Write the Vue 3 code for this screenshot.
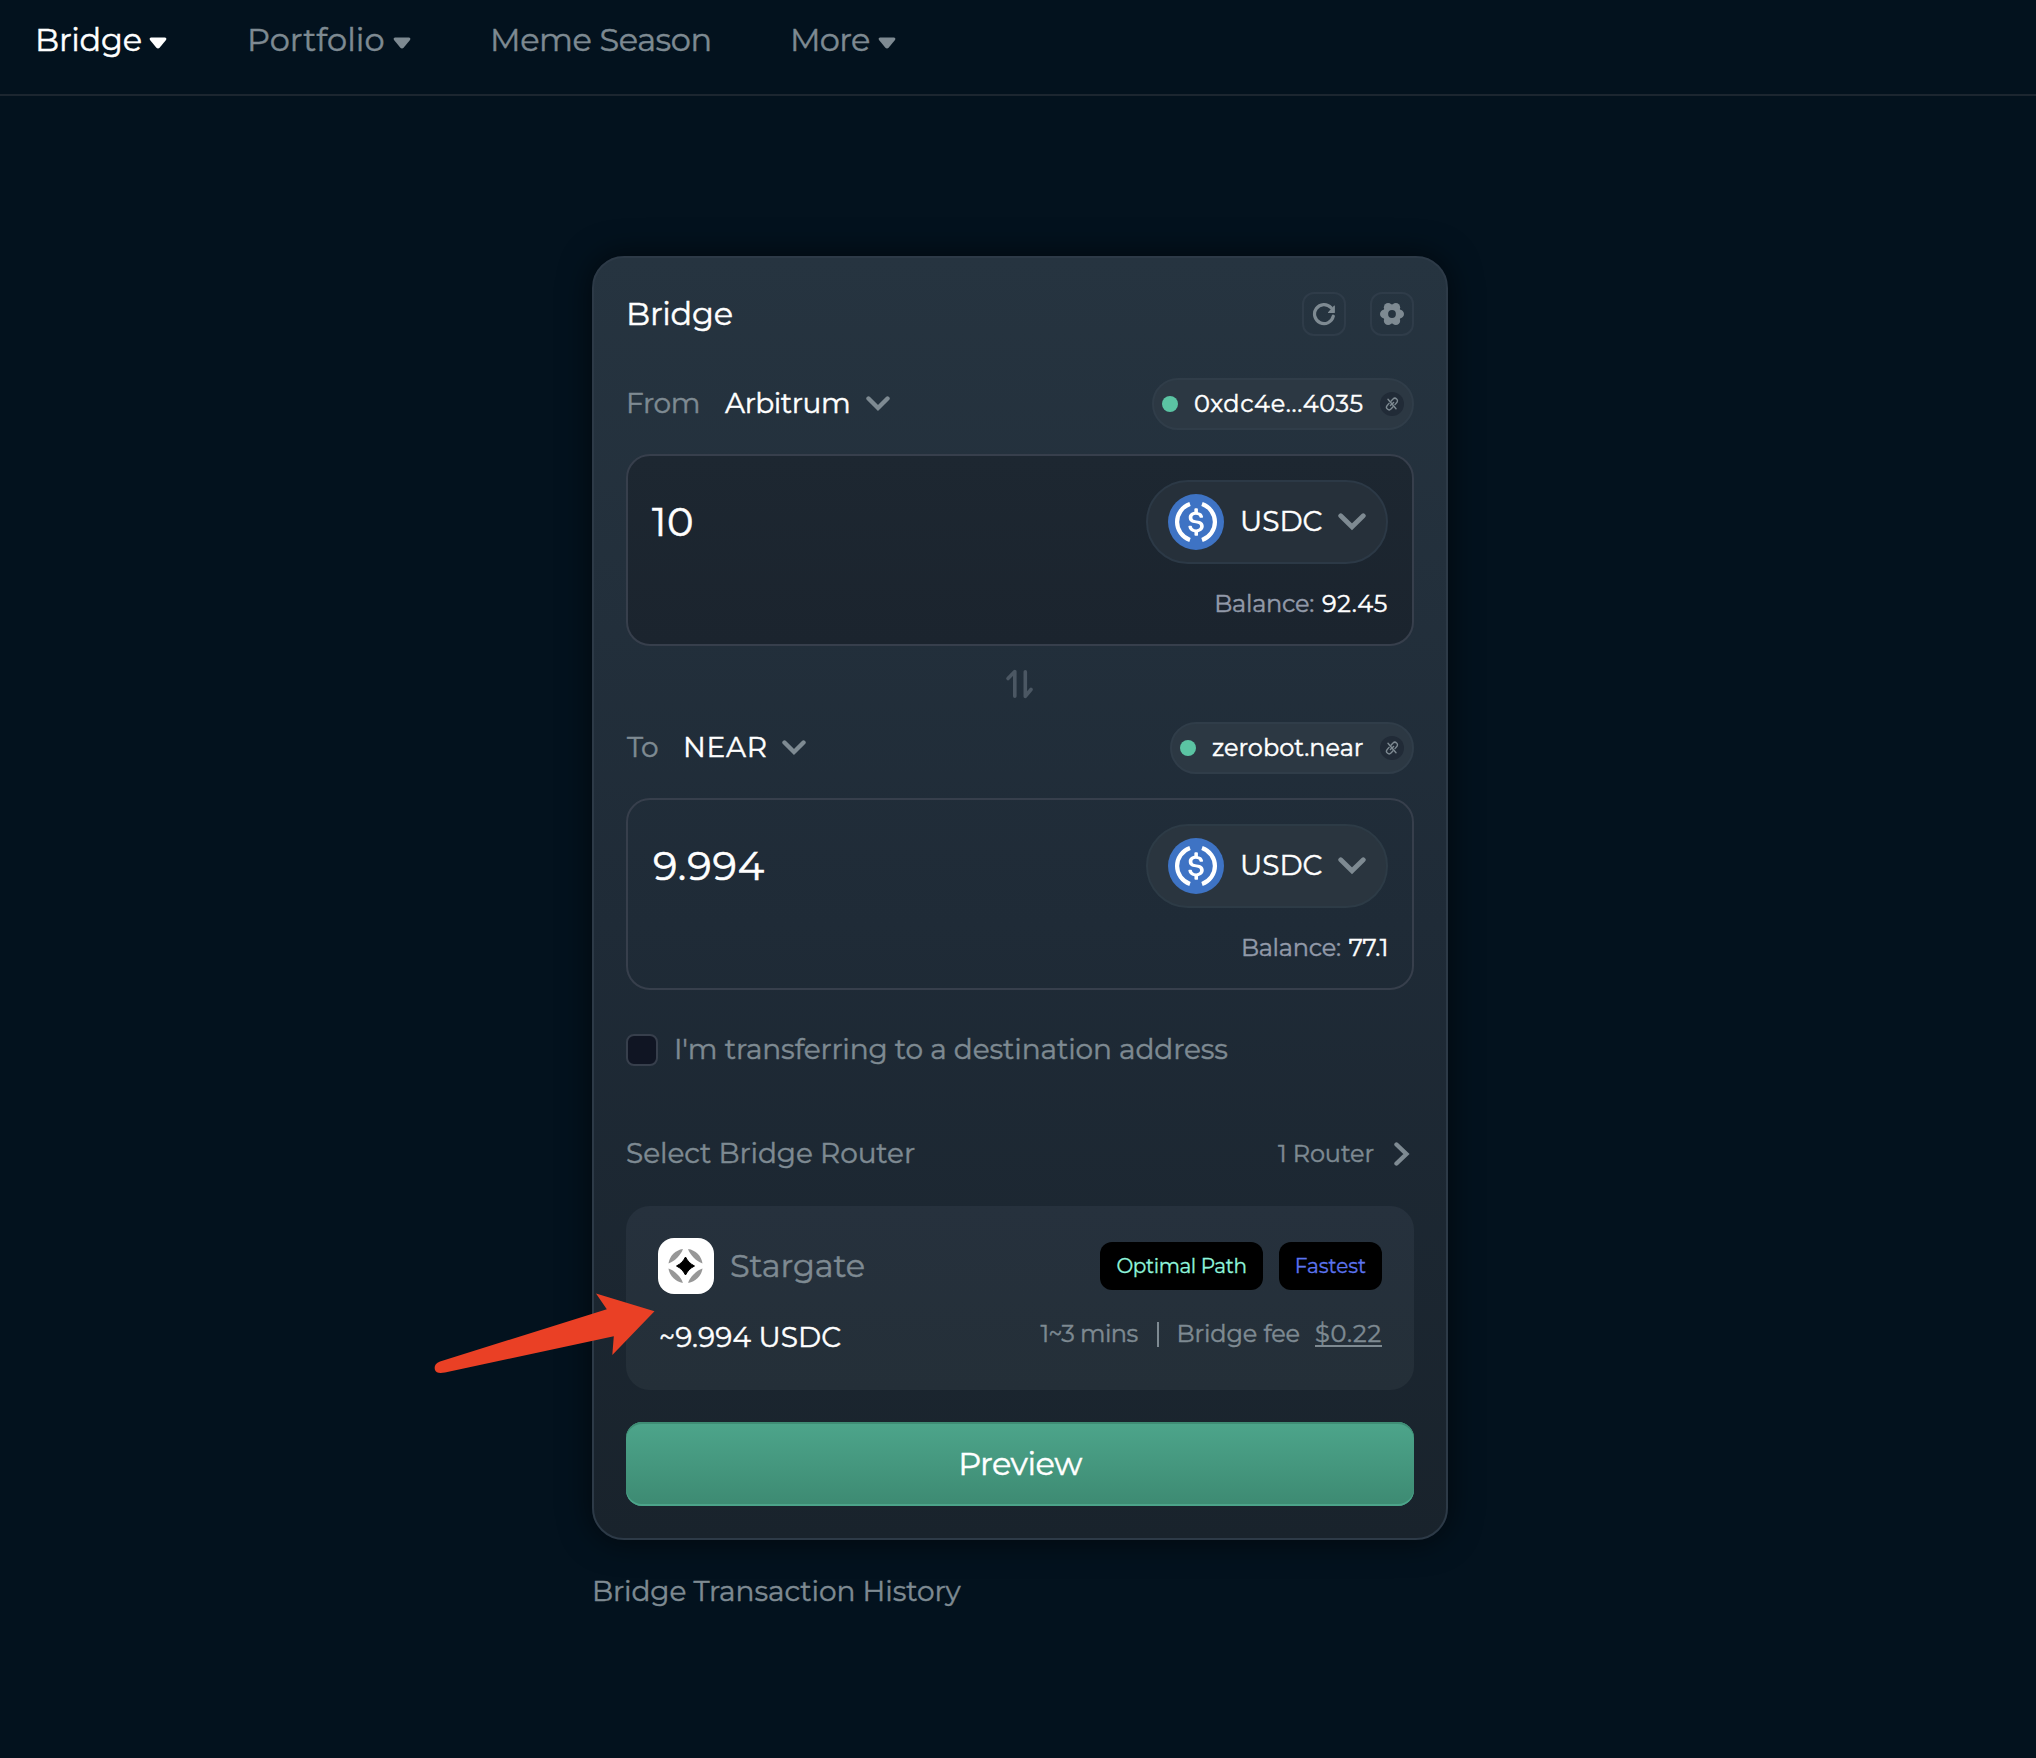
<script setup>
const nav = [
  { id: 'bridge', label: 'Bridge', caret: true, active: true },
  { id: 'portfolio', label: 'Portfolio', caret: true },
  { id: 'meme', label: 'Meme Season' },
  { id: 'more', label: 'More', caret: true },
]
const sides = [
  { id: 'from', title: 'From', chain: 'Arbitrum', account: '0xdc4e...4035', amount: '10', token: 'USDC', balance: '92.45' },
  { id: 'to', title: 'To', chain: 'NEAR', account: 'zerobot.near', amount: '9.994', token: 'USDC', balance: '77.1' },
]
const lobes = [0, 60, 120, 180, 240, 300].map((a) => ({
  x: 12 + 7.7 * Math.cos((a * Math.PI) / 180),
  y: 12 + 7.7 * Math.sin((a * Math.PI) / 180),
}))
</script>

<template>
  <div class="page">
    <nav class="nav">
      <a v-for="n in nav" :key="n.id" class="nav-item" :class="[n.id, { active: n.active }]">
        <span class="nav-label">{{ n.label }}</span>
        <svg v-if="n.caret" class="caret" width="18" height="12" viewBox="0 0 18 12">
          <path d="M2.2 0.5h13.6c1.4 0 2 1.3 1.2 2.4l-6.4 7.8c-.9 1-2.3 1-3.200 0L1 2.900C.2 1.800.8.5 2.200.5z" fill="currentColor" />
        </svg>
      </a>
    </nav>

    <main class="main">
      <section class="card">
        <header class="head">
          <h1 class="title">Bridge</h1>
          <div class="tools">
            <button class="tool">
              <svg width="24" height="24" viewBox="0 0 24 24">
                <path d="M21.300 14.200A9.500 9.500 0 1 1 19 5.600" fill="none" stroke="currentColor" stroke-width="3.200" stroke-linecap="round" />
                <path d="M21.900 3.700c.6-.5 1-.2 1 .5v6c0 .6-.3.900-.9.900h-5.300c-.8 0-1-.6-.4-1.100z" fill="currentColor" />
              </svg>
            </button>
            <button class="tool">
              <svg width="24" height="24" viewBox="0 0 24 24">
                <mask id="gear-hole">
                  <rect width="24" height="24" fill="#fff" />
                  <circle cx="12" cy="12" r="3.900" fill="#000" />
                </mask>
                <g fill="currentColor" mask="url(#gear-hole)">
                  <circle cx="12" cy="12" r="9.400" />
                  <circle v-for="(l, i) in lobes" :key="i" :cx="l.x" :cy="l.y" r="4.300" />
                </g>
              </svg>
            </button>
          </div>
        </header>

        <template v-for="(s, i) in sides" :key="s.id">
          <div v-if="i === 1" class="swap">
            <svg width="28" height="30" viewBox="0 0 28 30" fill="none" stroke="currentColor" stroke-width="3.600" stroke-linecap="round" stroke-linejoin="round">
              <path d="M3 9.500 9.800 2.600V27.200" />
              <path d="M20.300 2.800V27.400L26 20.500" />
            </svg>
          </div>

          <div class="row" :class="s.id">
            <div class="chain">
              <span class="chain-title">{{ s.title }}</span>
              <span class="chain-name">{{ s.chain }}</span>
              <svg class="chev" width="24" height="16" viewBox="0 0 24 16">
                <path d="M2.500 2.500 12 12l9.500-9.500" fill="none" stroke="currentColor" stroke-width="4.400" stroke-linecap="round" />
              </svg>
            </div>
            <div class="chip">
              <i class="dot"></i>
              <span class="account">{{ s.account }}</span>
              <span class="unlink">
                <svg width="14" height="14" viewBox="0 0 14 14" fill="none" stroke="currentColor" stroke-width="1.400" stroke-linecap="round">
                  <path d="M6 4.200 8 2.100a2.500 2.500 0 0 1 3.800 3.400L10 7.600" />
                  <path d="M8 9.800 6 11.900a2.500 2.500 0 0 1-3.800-3.400L4 6.400" />
                  <path d="M3 2.300 11 11.700" />
                  <path d="M8.600 5.400 5.400 8.600" />
                </svg>
              </span>
            </div>
          </div>

          <div class="panel" :class="s.id">
            <div class="panel-top">
              <span class="amount">{{ s.amount }}</span>
              <div class="token">
                <svg width="56" height="56" viewBox="0 0 56 56">
                  <circle cx="28" cy="28" r="28" fill="#3e73c4" />
                  <path d="M22 10a19 19 0 0 0 0 36M34 10a19 19 0 0 1 0 36" fill="none" stroke="#fff" stroke-width="4.200" />
                  <path transform="translate(28 28.100) scale(1.880) translate(-16 -16)" fill="#fff" d="M20.124 18.240c0-2.124-1.280-2.852-3.840-3.156-1.828-.243-2.193-.728-2.193-1.578 0-.850.610-1.396 1.828-1.396 1.097 0 1.707.364 2.011 1.275a.458.458 0 0 0 .427.303h.975a.416.416 0 0 0 .427-.425v-.060a3.040 3.040 0 0 0-2.743-2.489V9.142c0-.243-.183-.425-.487-.486h-.915c-.243 0-.426.182-.487.486v1.396c-1.829.242-2.986 1.456-2.986 2.974 0 2.002 1.218 2.791 3.778 3.095 1.707.303 2.255.668 2.255 1.639 0 .970-.853 1.638-2.011 1.638-1.585 0-2.133-.667-2.316-1.578-.060-.242-.244-.364-.427-.364h-1.036a.416.416 0 0 0-.426.425v.060c.243 1.518 1.219 2.610 3.230 2.914v1.457c0 .242.183.425.487.485h.915c.243 0 .426-.182.487-.485V21.340c1.829-.303 3.047-1.578 3.047-3.100z" />
                </svg>
                <span class="token-name">{{ s.token }}</span>
                <svg class="chev" width="28" height="18" viewBox="0 0 28 18">
                  <path d="M2.700 2.800 14 13.800 25.300 2.800" fill="none" stroke="currentColor" stroke-width="4.800" stroke-linecap="round" />
                </svg>
              </div>
            </div>
            <div class="balance">
              <span class="balance-label">Balance:</span>
              <span class="balance-value">{{ s.balance }}</span>
            </div>
          </div>
        </template>

        <label class="dest">
          <span class="box"></span>
          <span class="dest-text">I'm transferring to a destination address</span>
        </label>

        <div class="router-head">
          <span class="router-title">Select Bridge Router</span>
          <div class="router-count">
            <span>1 Router</span>
            <svg width="16" height="24" viewBox="0 0 16 24">
              <path d="M2.500 2.500 12.400 12 2.500 21.500" fill="none" stroke="currentColor" stroke-width="4.400" stroke-linecap="round" />
            </svg>
          </div>
        </div>

        <div class="router">
          <div class="router-top">
            <div class="brand">
              <svg class="logo" width="56" height="56" viewBox="0 0 56 56">
                <rect width="56" height="56" rx="16" fill="#fff" />
                <g class="soft" transform="translate(27.500 28)">
                  <path v-for="a in [0, 90, 180, 270]" :key="a" :transform="`rotate(${a})`" d="M2.600-17C10-16 16-10 17-2.600 11.500-4 4-11.500 2.600-17z" fill="#979797" />
                  <path d="M0-9C2.400-4.500 4.500-2.400 9 0 4.500 2.400 2.400 4.500 0 9-2.400 4.500-4.500 2.400-9 0-4.500-2.400-2.400-4.500 0-9z" fill="#000" stroke="#000" />
                </g>
              </svg>
              <span class="brand-name">Stargate</span>
            </div>
            <div class="tags">
              <span class="tag optimal">Optimal Path</span>
              <span class="tag fastest">Fastest</span>
            </div>
          </div>
          <div class="router-bottom">
            <span class="receive">~9.994 USDC</span>
            <div class="meta">
              <span class="mins">1~3 mins</span>
              <i class="bar"></i>
              <span class="fee-label">Bridge fee</span>
              <span class="fee">$0.22</span>
            </div>
          </div>
          <svg class="arrow" width="222" height="84" viewBox="0 0 222 84">
            <path d="M220.500 21.200 162 3.500 172.800 19.300 6 71.500C1 73.500 0 76.500 1 80 2 82.800 5 83.600 11 82.600L179.800 46.300 178.300 65z" fill="#ea4025" />
          </svg>
        </div>

        <button class="preview">Preview</button>
      </section>

      <a class="history">Bridge Transaction History</a>
    </main>
  </div>
</template>

<style>
body {
  background: #03121e;
}
</style>

<style scoped>
.page {
  min-height: 1758px;
  background: #03121e;
  color: #fff;
  font-family: Montserrat, Inter, sans-serif;
  font-size: 28px;
  font-weight: 400;
  line-height: 40px;
  white-space: nowrap;
  -webkit-text-stroke: 0.45px currentColor;
}
svg {
  display: block;
  flex: none;
}
button {
  margin: 0;
  padding: 0;
  font: inherit;
}
.nav {
  display: flex;
  box-sizing: border-box;
  height: 96px;
  padding: 20px 0 0 35px;
  border-bottom: 2px solid #1c2630;
  font-size: 32px;
  color: #7e8a92;
}
.nav-item {
  display: flex;
  height: 40px;
}
.nav-item.active {
  color: #fff;
}
.nav-item.bridge { width: 212px; letter-spacing: -0.25px; }
.nav-item.portfolio { width: 243px; letter-spacing: 0.1px; }
.nav-item.meme { width: 300px; letter-spacing: -0.42px; }
.nav-item.more { width: 106px; letter-spacing: -0.7px; }
.bridge .nav-label { width: 114px; }
.portfolio .nav-label { width: 146px; }
.more .nav-label { width: 88px; }
.caret { margin-top: 17px; }

.main {
  width: 856px;
  margin: 160px 0 0 592px;
}
.card {
  box-sizing: border-box;
  height: 1284px;
  padding: 34px 32px 0;
  border: 2px solid #2d3a47;
  border-radius: 32px;
  background: linear-gradient(180deg, #263440 0%, #1f2b37 52%, #19232c 100%);
  box-shadow: 0 0 32px rgba(0, 0, 0, 0.6);
}
.head {
  display: flex;
  align-items: center;
  justify-content: space-between;
  height: 44px;
}
.title {
  margin: 0;
  font-size: 32px;
  font-weight: 400;
  letter-spacing: -0.25px;
}
.tools {
  display: flex;
  gap: 24px;
}
.tool {
  display: flex;
  align-items: center;
  justify-content: center;
  box-sizing: border-box;
  width: 44px;
  height: 44px;
  border: 2px solid #2f3c49;
  border-radius: 12px;
  background: transparent;
  color: #7e8a92;
}
.row {
  display: flex;
  align-items: center;
  justify-content: space-between;
  height: 52px;
}
.row.from { margin-top: 42px; }
.chain {
  display: flex;
  align-items: center;
}
.chain-title,
.chain-name {
  height: 42px;
}
.chain-title {
  color: #7e8a92;
}
.from .chain-title { width: 99px; letter-spacing: -0.35px; }
.to .chain-title { width: 56px; margin-left: 1px; letter-spacing: -0.53px; }
.chain-name {
  color: #fff;
}
.from .chain-name { width: 141px; letter-spacing: -0.4px; }
.to .chain-name { width: 99px; letter-spacing: 0.7px; }
.chev {
  color: #7e8a92;
}
.chip {
  display: flex;
  align-items: center;
  box-sizing: border-box;
  height: 52px;
  padding: 0 8px;
  border: 2px solid #303d49;
  border-radius: 26px;
  background: #2c3843;
  font-size: 24px;
}
.from .chip { width: 262px; letter-spacing: 0.65px; }
.to .chip { width: 244px; letter-spacing: 0; }
.dot {
  width: 16px;
  height: 16px;
  border-radius: 50%;
  background: #5bc4a3;
}
.account {
  margin-left: 16px;
}
.unlink {
  display: flex;
  align-items: center;
  justify-content: center;
  width: 24px;
  height: 24px;
  margin-left: auto;
  border-radius: 50%;
  background: #212b37;
  color: #7e8a92;
}
.panel {
  box-sizing: border-box;
  height: 192px;
  margin-top: 24px;
  padding: 24px;
  border: 2px solid #373f4c;
  border-radius: 24px;
}
.panel.from {
  background: linear-gradient(180deg, #1d2731, #1b242e);
}
.panel-top {
  display: flex;
  align-items: center;
  justify-content: space-between;
}
.amount {
  font-size: 40px;
  letter-spacing: 0.6px;
  -webkit-text-stroke-width: 0.6px;
}
.to .amount { margin-left: 1px; letter-spacing: 0.9px; }
.token {
  display: flex;
  align-items: center;
  box-sizing: border-box;
  width: 242px;
  height: 84px;
  padding: 0 20px;
  border: 2px solid #2c3946;
  border-radius: 42px;
  background: #26303a;
}
.panel.to .token {
  border-color: #2d3b46;
  background: #2a353f;
}
.token-name {
  height: 42px;
  margin-left: 16px;
}
.token .chev {
  margin-left: auto;
}
.balance {
  display: flex;
  justify-content: flex-end;
  height: 32px;
  margin-top: 24px;
  font-size: 24px;
  line-height: 32px;
}
.balance-label {
  color: #929aa9;
  letter-spacing: -0.27px;
}
.balance-value {
  margin-left: 8px;
}
.from .balance-value { letter-spacing: 0.65px; }
.to .balance-value { letter-spacing: -0.3px; }
.swap {
  display: flex;
  align-items: center;
  justify-content: center;
  height: 76px;
  padding-right: 3px;
  color: #4b5763;
}
.dest {
  display: flex;
  align-items: center;
  height: 32px;
  margin-top: 44px;
  color: #7e8a92;
}
.box {
  box-sizing: border-box;
  width: 32px;
  height: 32px;
  border: 2px solid #373f4c;
  border-radius: 8px;
  background: #101523;
}
.dest-text {
  height: 42px;
  margin-left: 16px;
  letter-spacing: -0.12px;
}
.router-head {
  display: flex;
  align-items: center;
  justify-content: space-between;
  height: 40px;
  margin-top: 68px;
  color: #7e8a92;
  letter-spacing: -0.09px;
}
.router-title {
  height: 42px;
}
.router-count {
  display: flex;
  align-items: center;
  gap: 20px;
  padding-right: 4px;
  font-size: 24px;
  letter-spacing: -0.1px;
}
.router {
  position: relative;
  box-sizing: border-box;
  height: 184px;
  margin-top: 32px;
  padding: 32px;
  border-radius: 24px;
  background: linear-gradient(180deg, #26313d, #242f38);
}
.router-top {
  display: flex;
  align-items: center;
  justify-content: space-between;
  height: 56px;
}
.brand {
  display: flex;
  align-items: center;
}
.soft {
  filter: blur(0.7px);
}
.brand-name {
  margin-left: 16px;
  color: #7e8a92;
  font-size: 32px;
  letter-spacing: -0.1px;
}
.tags {
  display: flex;
  gap: 16px;
}
.tag {
  box-sizing: border-box;
  height: 48px;
  border-radius: 12px;
  background: #000;
  font-size: 20px;
  line-height: 48px;
  text-align: center;
  -webkit-text-stroke-width: 0.3px;
}
.optimal {
  width: 163px;
  color: #8ff5dc;
  letter-spacing: -0.4px;
}
.fastest {
  width: 103px;
  color: #5c74f0;
}
.router-bottom {
  display: flex;
  align-items: flex-start;
  justify-content: space-between;
  margin-top: 24px;
}
.receive {
  line-height: 38px;
  margin-left: 1px;
  letter-spacing: 0.1px;
}
.meta {
  display: flex;
  align-items: center;
  height: 32px;
  color: #7e8a92;
  font-size: 24px;
  line-height: 32px;
}
.mins { letter-spacing: -0.56px; }
.bar {
  width: 2px;
  height: 25px;
  margin: 0 18px 0 19px;
  background: #7e8a92;
}
.fee-label { letter-spacing: -0.1px; }
.fee {
  margin-left: 15px;
  letter-spacing: 0.8px;
  text-decoration: underline;
  text-decoration-thickness: 2px;
  text-underline-offset: 3px;
  text-decoration-skip-ink: none;
}
.arrow {
  position: absolute;
  left: -192px;
  top: 84px;
}
.preview {
  display: block;
  box-sizing: border-box;
  width: 100%;
  height: 84px;
  margin-top: 32px;
  border: 0;
  border-radius: 16px;
  background: linear-gradient(180deg, #4da58b, #3d8a72);
  box-shadow: inset 0 2px 0 #3f8d75, inset 0 -2px 0 #4ca48a;
  color: #fff;
  font-size: 32px;
  letter-spacing: -0.45px;
}
.history {
  display: block;
  margin-top: 31px;
  letter-spacing: -0.08px;
}
.history {
  color: #7e8a92;
}
</style>
